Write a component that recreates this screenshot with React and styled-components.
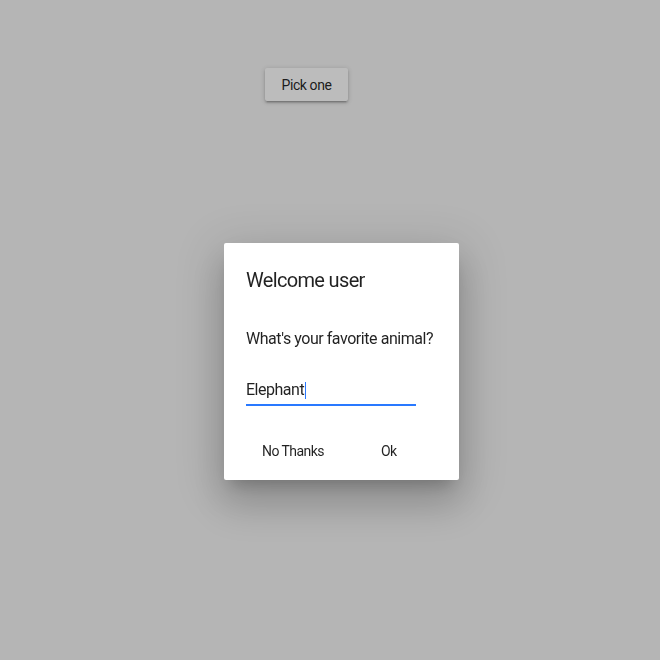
import React from "react";
import styled, { createGlobalStyle } from "styled-components";

const Global = createGlobalStyle`
  html, body { margin: 0; padding: 0; background: #b5b5b5; }
  body { font-family: Roboto, "Noto Sans", sans-serif; color: rgba(0,0,0,0.87); }
`;

const Page = styled.div`
  min-height: 660px;
  padding: 68px 0 0 265px;
  box-sizing: border-box;
`;

const RaisedButton = styled.button`
  font-family: Roboto, sans-serif;
  font-size: 14px;
  letter-spacing: -0.03em;
  height: 33px;
  width: 83px;
  border: none;
  border-radius: 2px;
  background: #bcbcbc;
  color: rgba(0,0,0,0.87);
  box-shadow: 0 2px 2px 0 rgba(0,0,0,0.14), 0 3px 1px -2px rgba(0,0,0,0.12), 0 1px 5px 0 rgba(0,0,0,0.2);
  padding: 0;
`;

const Dialog = styled.div`
  position: fixed;
  top: 243px;
  left: 224px;
  width: 235px;
  height: 237px;
  box-sizing: border-box;
  background: #fff;
  border-radius: 2px;
  padding: 25px 0 0 0;
  box-shadow: 0 11px 15px -7px rgba(0,0,0,0.2), 0 24px 38px 3px rgba(0,0,0,0.14), 0 9px 46px 8px rgba(0,0,0,0.12);
  display: flex;
  flex-direction: column;
  white-space: nowrap;
`;

const Title = styled.h2`
  margin: 0;
  padding: 0 22px;
  font-size: 20px;
  font-weight: 400;
  line-height: 24px;
  letter-spacing: -0.033em;
  color: rgba(0,0,0,0.87);
`;

const Body = styled.p`
  margin: 37px 0 0;
  padding: 0 22px;
  font-size: 16px;
  line-height: 20px;
  letter-spacing: -0.028em;
  color: rgba(0,0,0,0.87);
`;

const Field = styled.div`
  margin: 31px 0 0 22px;
  width: 170px;
  border-bottom: 2px solid #2979ff;
  font-size: 16px;
  line-height: 20px;
  letter-spacing: -0.03em;
  padding-bottom: 4px;
  display: flex;
  align-items: center;
`;

const Caret = styled.span`
  display: inline-block;
  width: 1px;
  height: 17px;
  background: #2979ff;
  margin-left: 1px;
`;

const Actions = styled.div`
  display: flex;
  gap: 25px;
  margin: 35px 0 0 22px;
`;

const FlatButton = styled.button`
  font-family: Roboto, sans-serif;
  font-size: 14px;
  letter-spacing: -0.04em;
  background: none;
  border: none;
  padding: 0 16px;
  height: 20px;
  color: rgba(0,0,0,0.87);
`;

export default function App() {
  return (
    <>
      <Global />
      <Page>
        <RaisedButton>Pick one</RaisedButton>
      </Page>
      <Dialog>
        <Title>Welcome user</Title>
        <Body>What's your favorite animal?</Body>
        <Field>
          Elephant<Caret />
        </Field>
        <Actions>
          <FlatButton>No Thanks</FlatButton>
          <FlatButton>Ok</FlatButton>
        </Actions>
      </Dialog>
    </>
  );
}
